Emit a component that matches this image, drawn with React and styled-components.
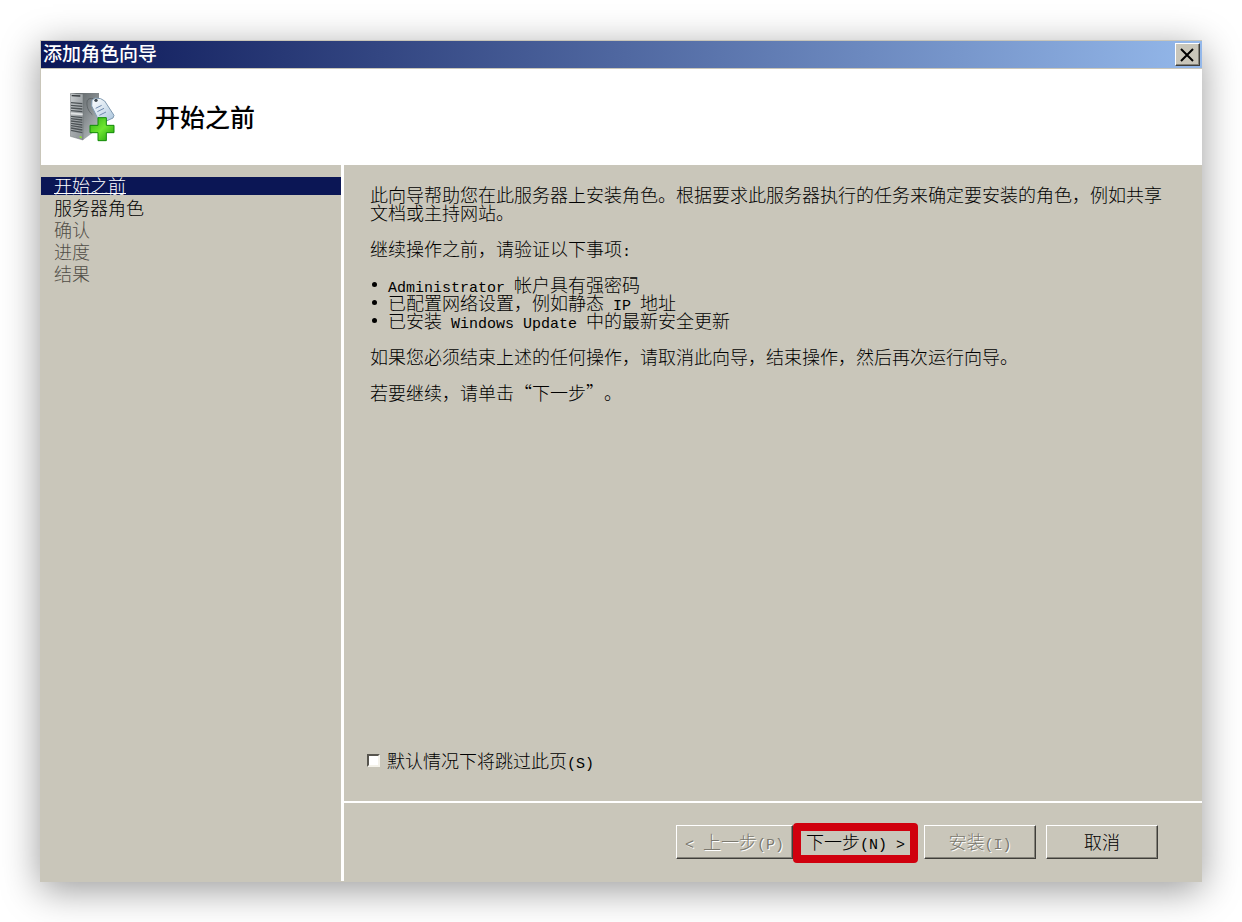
import { useState } from "react";
import styled, { createGlobalStyle, css } from "styled-components";

const steps = [
  { name: "开始之前", state: "current" },
  { name: "服务器角色", state: "ready" },
  { name: "确认", state: "pending" },
  { name: "进度", state: "pending" },
  { name: "结果", state: "pending" },
];

const ServerIcon = () => (
  <svg width="47" height="50" viewBox="60 36 141 150" aria-hidden="true">
    <defs>
      <linearGradient id="front" x1="0" y1="0" x2="1" y2="1">
        <stop offset="0" stopColor="#c9cdcf" />
        <stop offset="0.5" stopColor="#a3a8ab" />
        <stop offset="1" stopColor="#8b9194" />
      </linearGradient>
      <linearGradient id="side" x1="0" y1="0" x2="1" y2="1">
        <stop offset="0" stopColor="#565c5f" />
        <stop offset="0.5" stopColor="#83898c" />
        <stop offset="1" stopColor="#c3c8ca" />
      </linearGradient>
      <linearGradient id="tag" x1="0" y1="0" x2="1" y2="1">
        <stop offset="0" stopColor="#ffffff" />
        <stop offset="1" stopColor="#a9c4dc" />
      </linearGradient>
      <linearGradient id="plus" x1="0" y1="0" x2="1" y2="1">
        <stop offset="0" stopColor="#2fae12" />
        <stop offset="0.5" stopColor="#6fe630" />
        <stop offset="1" stopColor="#1a9c06" />
      </linearGradient>
    </defs>
    <path d="M61 41l18-2h68v106l-48 35z" fill="url(#side)" />
    <path d="M61 41l38 1v138l-38-11z" fill="url(#front)" stroke="#6b7073" strokeWidth="1.5" />
    <path d="M65 47l26 1" stroke="#33383b" strokeWidth="4" />
    <path d="M63 68l34 3M63 76l34 3M63 84l34 3M63 92l34 3" stroke="#4d5356" strokeWidth="4" />
    <path
      d="M63 109l34 4M63 116l34 4M63 123l34 4M63 130l34 5M63 137l34 5M63 144l34 6M63 151l34 7"
      stroke="#4d5356"
      strokeWidth="4"
    />
    <path d="M62 100l36 3" stroke="#e0e3e4" strokeWidth="5" />
    <path d="M89 168l6 2v5l-6-2z" fill="#8cf01e" />
    <path d="M138 60c-12-8-26-6-27 6s2 26 16 38" fill="none" stroke="#4e5558" strokeWidth="2" />
    <path
      d="M126 60l9-6 17 2 12 7 28 43-3 8-31 14-10-3-23-47z"
      fill="url(#tag)"
      stroke="#7f99b0"
      strokeWidth="3"
    />
    <circle cx="138" cy="61" r="5" fill="#3c464d" />
    <path d="M137 85l18-9M142 95l20-10M148 106l20-10" stroke="#6f88ac" strokeWidth="3" />
    <path
      d="M144 113h25v23h23v22h-23v24h-25v-24h-24v-22h24z"
      fill="url(#plus)"
      stroke="#128a08"
      strokeWidth="3"
    />
  </svg>
);

const App = () => {
  const [skip, setSkip] = useState(false);

  return (
    <>
      <GlobalStyle />
      <Desktop lang="zh-CN">
        <Window>
          <TitleBar>
            <Title>添加角色向导</Title>
            <CloseButton type="button" aria-label="关闭">
              <svg width="14" height="14" viewBox="0 0 14 14" aria-hidden="true">
                <path d="M1 1l12 12M13 1L1 13" stroke="#000" strokeWidth="2" />
              </svg>
            </CloseButton>
          </TitleBar>
          <Header>
            <ServerIcon />
            <h1>开始之前</h1>
          </Header>
          <Body>
            <Sidebar>
              {steps.map((step) => (
                <Step key={step.name} $state={step.state}>
                  {step.state === "current" ? <a href="#start">{step.name}</a> : step.name}
                </Step>
              ))}
            </Sidebar>
            <Main>
              <Content>
                <p>
                  此向导帮助您在此服务器上安装角色。根据要求此服务器执行的任务来确定要安装的角色，例如共享文档或主持网站。
                </p>
                <p>
                  继续操作之前，请验证以下事项<Latin>:</Latin>
                </p>
                <Checks>
                  <li>
                    <p>
                      <Latin>Administrator </Latin>帐户具有强密码
                    </p>
                  </li>
                  <li>
                    <p>
                      已配置网络设置，例如静态<Latin> IP </Latin>地址
                    </p>
                  </li>
                  <li>
                    <p>
                      已安装<Latin> Windows Update </Latin>中的最新安全更新
                    </p>
                  </li>
                </Checks>
                <p>如果您必须结束上述的任何操作，请取消此向导，结束操作，然后再次运行向导。</p>
                <p>若要继续，请单击“下一步”。</p>
                <SkipRow>
                  <input
                    type="checkbox"
                    id="skip"
                    checked={skip}
                    onChange={(e) => setSkip(e.target.checked)}
                  />
                  <label htmlFor="skip">
                    默认情况下将跳过此页<Latin>(S)</Latin>
                  </label>
                </SkipRow>
              </Content>
              <Footer>
                <Paging>
                  <Button type="button" $wide disabled>
                    <Latin>&lt; </Latin>上一步<Latin>(P)</Latin>
                  </Button>
                  <Button type="button" $wide $marked>
                    下一步<Latin>(N) &gt;</Latin>
                  </Button>
                </Paging>
                <Button type="button" disabled>
                  安装<Latin>(I)</Latin>
                </Button>
                <Button type="button">取消</Button>
              </Footer>
            </Main>
          </Body>
        </Window>
      </Desktop>
    </>
  );
};

const GlobalStyle = createGlobalStyle`
  * {
    box-sizing: border-box;
  }
  body {
    margin: 0;
    background: #fff;
    color: #000;
    font-family: "Noto Sans CJK SC", sans-serif;
    font-size: 18px;
    font-weight: 300;
    line-height: 18px;
    text-spacing-trim: space-all;
  }
  h1, p, ul, ol {
    margin: 0;
    padding: 0;
  }
`;

const bevel = css`
  border: 1px solid;
  border-color: #fff #3f3e3a #3f3e3a #fff;
  box-shadow: inset -1px -1px 0 #85837a;
`;

const Desktop = styled.div`
  display: flex;
  min-height: 100vh;
  padding: 40px;
`;

const Window = styled.div`
  flex: 1;
  display: flex;
  flex-direction: column;
  border: 1px solid #c9c6ba;
  border-right: none;
  background: #c9c6ba;
  box-shadow: 0 8px 36px rgba(0, 0, 0, 0.4);
`;

const TitleBar = styled.div`
  display: flex;
  align-items: center;
  justify-content: space-between;
  height: 28px;
  padding: 0 2px;
  border-bottom: 1px solid #c9c6ba;
  background: linear-gradient(to right, #0b1757, #94b8ea);
`;

const Title = styled.span`
  padding-bottom: 3px;
  color: #fff;
  font-size: 19px;
  font-weight: 500;
`;

const CloseButton = styled.button`
  ${bevel}
  display: flex;
  align-items: center;
  justify-content: center;
  width: 25px;
  height: 23px;
  padding: 0 1px 0 0;
  background: #c9c6ba;
`;

const Header = styled.header`
  display: flex;
  align-items: center;
  gap: 38px;
  height: 96px;
  padding-left: 29px;
  background: #fff;
  h1 {
    padding-bottom: 2px;
    font-size: 25px;
    font-weight: 500;
    line-height: 30px;
  }
`;

const Body = styled.div`
  flex: 1;
  display: flex;
`;

const Sidebar = styled.ol`
  display: flex;
  flex-direction: column;
  gap: 4px;
  width: 303px;
  padding-top: 12px;
  border-right: 3px solid #fff;
  list-style: none;
`;

const stepColors = {
  current: "#fff",
  ready: "#000",
  pending: "#504d46",
};

const Step = styled.li`
  height: 18px;
  padding-left: 13px;
  color: ${(props) => stepColors[props.$state]};
  background: ${(props) => (props.$state === "current" ? "#0b1655" : "none")};
  line-height: 16px;
  a {
    display: inline-block;
    height: 17px;
    border-bottom: 1px solid #fff;
    color: inherit;
    text-decoration: none;
    vertical-align: top;
  }
`;

const Main = styled.main`
  flex: 1;
  display: flex;
  flex-direction: column;
`;

const Content = styled.section`
  flex: 1;
  display: flex;
  flex-direction: column;
  gap: 18px;
  padding: 20px 26px 32px;
`;

const Latin = styled.span`
  font-family: "Liberation Mono", monospace;
  font-size: 15px;
  font-weight: 400;
  line-height: 0;
  white-space: pre;
`;

const Checks = styled.ul`
  list-style: none;
  li {
    display: flex;
  }
  li::before {
    content: "";
    width: 5px;
    height: 5px;
    margin: 7px 11px 0 2px;
    border-radius: 50%;
    background: #000;
  }
`;

const SkipRow = styled.div`
  display: flex;
  align-items: center;
  gap: 7px;
  margin-top: auto;
  margin-left: -3px;
  input {
    appearance: none;
    width: 13px;
    height: 13px;
    margin: 0;
    border: 2px solid;
    border-color: #57554e #f4f2ea #f4f2ea #57554e;
    background: #fff;
    &:checked {
      background: #000;
    }
  }
`;

const Footer = styled.footer`
  display: flex;
  justify-content: flex-end;
  gap: 10px;
  padding: 22px 44px 22px 0;
  border-top: 2px solid #fff;
`;

const Paging = styled.div`
  display: flex;
  gap: 4px;
`;

const Button = styled.button`
  ${bevel}
  position: relative;
  width: ${(props) => (props.$wide ? "117px" : "112px")};
  height: 34px;
  padding: 0 0 3px;
  background: #c9c6ba;
  color: #000;
  font: inherit;
  white-space: nowrap;
  &:disabled {
    color: #7b796f;
    text-shadow: 1px 1px 0 #fff;
  }
  ${(props) =>
    props.$marked &&
    css`
      border-color: transparent;
      box-shadow: none;
      &::after {
        content: "";
        position: absolute;
        inset: -3px -5px -5px;
        border: 8px solid #d0000e;
        border-radius: 4px;
      }
    `}
`;

export default App;
